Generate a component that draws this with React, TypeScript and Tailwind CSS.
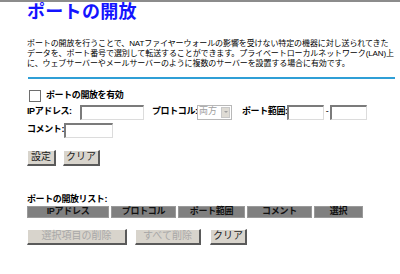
const font = {
  fontFamily: '"Liberation Sans", "Noto Sans CJK JP", sans-serif',
};

function TextBox({ w }: { w: string }) {
  return (
    <div
      className={`${w} shrink-0 h-[15px] bg-white border-t-2 border-l-2 border-r border-b border-t-[#7b7b7b] border-l-[#7b7b7b] border-r-[#dcdcdc] border-b-[#dcdcdc]`}
    />
  );
}

function Btn({ label, w, disabled }: { label: string; w: string; disabled?: boolean }) {
  return (
    <div
      className={`${w} h-[16px] flex items-center justify-center whitespace-nowrap bg-[#d8d4cc] border-t border-l border-r-2 border-b-2 border-t-white border-l-white border-r-[#5a5a5a] border-b-[#5a5a5a] text-[10px] leading-none ${
        disabled ? "text-[#a8a8a8]" : "text-[#222]"
      }`}
    >
      {label}
    </div>
  );
}

const cols = [
  { label: "IPアドレス", w: "w-[82px]" },
  { label: "プロトコル", w: "w-[65px]" },
  { label: "ポート範囲", w: "w-[67px]" },
  { label: "コメント", w: "w-[65px]" },
  { label: "選択", w: "w-[49px]" },
];

export default function App() {
  return (
    <div
      className="w-[400px] h-[274px] bg-white border-t-2 border-t-[#8c8c8c] overflow-hidden text-black"
      style={font}
    >
      <div className="pl-[27px]">
        <h1 className="text-[18px] font-bold text-[#1414ff] leading-[20px] tracking-[0.3px]">
          ポートの開放
        </h1>
        <p className="mt-[17px] text-[8px] leading-[10px] tracking-[-0.1px] whitespace-nowrap">
          ポートの開放を行うことで、NATファイヤーウォールの影響を受けない特定の機器に対し送られてきた
          <br />
          データを、ポート番号で選別して転送することができます。プライベートローカルネットワーク(LAN)上
          <br />
          に、ウェブサーバーやメールサーバーのように複数のサーバーを設置する場合に有効です。
        </p>
        <div className="mt-[8px] ml-[1px] w-[367px] h-[2px] bg-[#2f9fd6]" />

        <div className="mt-[10px] flex items-center gap-[5px] text-[9px] font-bold tracking-[-0.4px] whitespace-nowrap">
          <div className="ml-[2px] w-[12px] h-[12px] bg-white border border-[#6e6e6e]" />
          <span>ポートの開放を有効</span>
        </div>

        <div className="mt-[2px] flex items-center text-[9px] font-bold tracking-[-0.4px] whitespace-nowrap">
          <span className="w-[53px] shrink-0">IPアドレス:</span>
          <TextBox w="w-[64px]" />
          <span className="ml-[8px] w-[45px] shrink-0">プロトコル:</span>
          <div className="w-[35px] shrink-0 h-[15px] flex items-center bg-white border border-[#b8b8b8]">
            <span className="flex-1 pl-[1px] text-[9px] font-normal text-[#a0a0a0] tracking-normal">両方</span>
            <div className="w-[9px] h-[11px] mr-[1px] bg-[#dedbd4] border border-[#c8c8c8] flex items-center justify-center">
              <div className="w-0 h-0 border-l-[2px] border-r-[2px] border-t-[2px] border-l-transparent border-r-transparent border-t-[#a0a0a0]" />
            </div>
          </div>
          <span className="ml-[10px] w-[45px] shrink-0">ポート範囲:</span>
          <TextBox w="w-[37px]" />
          <span className="w-[6px] shrink-0 text-center font-normal">-</span>
          <TextBox w="w-[37px]" />
        </div>

        <div className="mt-[3px] flex items-center text-[9px] font-bold tracking-[-0.4px] whitespace-nowrap">
          <span className="w-[37px] shrink-0">コメント:</span>
          <TextBox w="w-[49px]" />
        </div>

        <div className="mt-[12px] flex gap-[7px]">
          <Btn label="設定" w="w-[29px]" />
          <Btn label="クリア" w="w-[37px]" />
        </div>

        <div className="mt-[27px] text-[9px] font-bold tracking-[-0.4px] leading-[12px] whitespace-nowrap">
          ポートの開放リスト:
        </div>
        <div className="mt-[1px] flex gap-[2px]">
          {cols.map((c) => (
            <div
              key={c.label}
              className={`${c.w} h-[12px] bg-[#808080] border border-[#9a9a9a] flex items-center justify-center whitespace-nowrap text-[9px] font-bold text-[#111] tracking-[-0.3px]`}
            >
              {c.label}
            </div>
          ))}
        </div>

        <div className="mt-[11px] flex">
          <Btn label="選択項目の削除" w="w-[100px]" disabled />
          <div className="ml-[8px]">
            <Btn label="すべて削除" w="w-[66px]" disabled />
          </div>
          <div className="ml-[9px]">
            <Btn label="クリア" w="w-[37px]" />
          </div>
        </div>
      </div>
    </div>
  );
}
